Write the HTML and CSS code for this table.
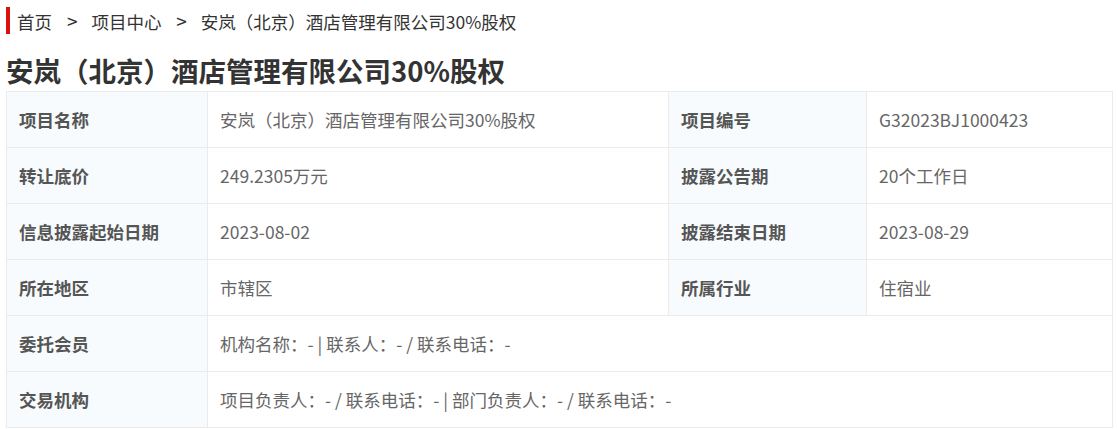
FILE: index.html
```html
<!DOCTYPE html>
<html lang="zh-CN">
<head>
<meta charset="UTF-8">
<meta name="viewport" content="width=device-width, initial-scale=1.0">
<title>安岚（北京）酒店管理有限公司30%股权</title>
<link rel="stylesheet" href="styles.css">
</head>
<body>
  <div id="page">
    <div class="crumbs">
      <a href="#">首页</a>
      <span class="sep">&gt;</span>
      <a href="#">项目中心</a>
      <span class="sep">&gt;</span>
      <span>安岚（北京）酒店管理有限公司30%股权</span>
    </div>
    <h1>安岚（北京）酒店管理有限公司30%股权</h1>
    <table class="info">
      <colgroup>
        <col class="c1"><col class="c2"><col class="c3"><col class="c4">
      </colgroup>
      <tr>
        <th>项目名称</th>
        <td>安岚（北京）酒店管理有限公司30%股权</td>
        <th>项目编号</th>
        <td>G32023BJ1000423</td>
      </tr>
      <tr>
        <th>转让底价</th>
        <td>249.2305万元</td>
        <th>披露公告期</th>
        <td>20个工作日</td>
      </tr>
      <tr>
        <th>信息披露起始日期</th>
        <td>2023-08-02</td>
        <th>披露结束日期</th>
        <td>2023-08-29</td>
      </tr>
      <tr>
        <th>所在地区</th>
        <td>市辖区</td>
        <th>所属行业</th>
        <td>住宿业</td>
      </tr>
      <tr>
        <th>委托会员</th>
        <td colspan="3">机构名称：- | 联系人：- / 联系电话：-</td>
      </tr>
      <tr>
        <th>交易机构</th>
        <td colspan="3">项目负责人：- / 联系电话：- | 部门负责人：- / 联系电话：-</td>
      </tr>
    </table>
  </div>
</body>
</html>
```

FILE: styles.css
```css
body {
  margin: 0;
  background-color: #fff;
  font-family: "Microsoft YaHei", "Noto Sans CJK SC", "Noto Sans", sans-serif;
  color: #333;
}
#page {
  padding: 7px 6px 0 6px;
}
.crumbs {
  border-left: 4px solid #d9120f;
  padding-left: 7px;
  height: 27px;
  line-height: 27px;
  font-size: 17.5px;
  color: #333;
}
.crumbs a {
  color: #333;
  text-decoration: none;
}
.crumbs .sep {
  display: inline-block;
  margin: 0 10px 0 11px;
  font-size: 19px;
}
h1 {
  margin: 18px 0 3px 0;
  font-size: 27.5px;
  line-height: 36px;
  font-weight: bold;
  color: #333;
}
.info {
  width: 1106px;
  border-collapse: collapse;
  table-layout: fixed;
  font-size: 17.5px;
}
.info .c1 { width: 201px; }
.info .c2 { width: 461px; }
.info .c3 { width: 198px; }
.info .c4 { width: 246px; }
.info th,
.info td {
  height: 55px;
  padding: 0 12px;
  border: 1px solid #ebebeb;
  text-align: left;
  vertical-align: middle;
  white-space: nowrap;
}
.info th {
  background-color: #f7fbfd;
  color: #555;
  font-weight: bold;
}
.info td {
  color: #666;
}
```
